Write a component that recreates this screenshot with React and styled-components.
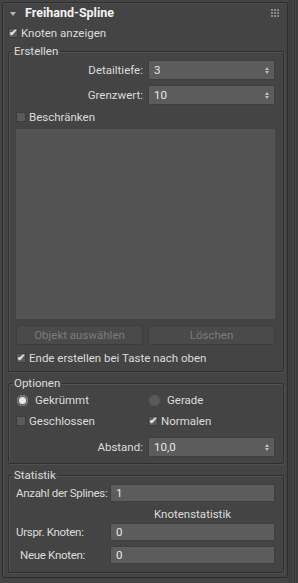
import React from 'react';
import styled, { createGlobalStyle } from 'styled-components';

const Global = createGlobalStyle`
  *, *::before, *::after { box-sizing: border-box; }
  html, body { margin: 0; padding: 0; background: #444444; }
  body { font-family: Roboto, "Noto Sans", sans-serif; font-size: 11.5px; line-height: 14px; color: #dcdcdc; }
`;

const Screen = styled.div`
  width: 298px;
  height: 583px;
  display: flex;
  background: #444444;
  overflow: hidden;
`;

const Rollout = styled.div`
  width: 286px;
  margin: 2px 0 5px 2px;
  border: 1px solid #2e2e2e;
  border-radius: 2px;
  display: flex;
  flex-direction: column;
  box-shadow: inset 1px 1px 0 #4c4c4c;
`;

const Scroll = styled.div`
  flex: 1;
  display: flex;
  gap: 2px;
  padding: 0 1px 0 1px;
  & > span { flex: 1; border-left: 1px solid #333; border-right: 1px solid #383838; background: #474747; }
`;

const Header = styled.div`
  height: 20px;
  flex: none;
  display: flex;
  align-items: center;
  padding: 0 8px 0 7px;
  gap: 9px;
  font-weight: bold;
  color: #f2f2f2;
  font-size: 12.5px;
`;

const Tri = styled.span`
  width: 0;
  height: 0;
  border-left: 3px solid transparent;
  border-right: 3px solid transparent;
  border-top: 4px solid #b8b8b8;
  margin-top: 1px;
`;

const Grip = styled.div`
  margin-left: auto;
  display: grid;
  grid-template-columns: repeat(3, 2px);
  gap: 1px;
  & > i { width: 2px; height: 2px; background: #8a8a8a; }
`;

const CheckRow = styled.label`
  display: flex;
  align-items: center;
  gap: 2px;
  flex: none;
  height: ${p => p.h || 18}px;
  padding-left: ${p => p.pad || 0}px;
`;

const Box = styled.span`
  width: 10px;
  height: 10px;
  background: #5a5a5a;
  border: 1px solid #3c3c3c;
  display: flex;
  align-items: center;
  justify-content: center;
  font-size: 10px;
  font-weight: bold;
  line-height: 1;
  color: #e0e0e0;
  margin-right: 1px;
`;

const Radio = styled.span`
  width: 11px;
  height: 11px;
  border-radius: 50%;
  background: ${p => (p.on ? '#e8e8e8' : '#5a5a5a')};
  box-shadow: ${p => (p.on ? 'inset 0 0 0 2px #6a6a6a' : 'none')};
  margin-right: 5px;
  margin-left: 1px;
`;

const Group = styled.fieldset`
  margin: ${p => p.mt || 0}px 3px 0 5px;
  padding: 0 8px ${p => p.pb || 0}px 7px;
  border: 1px solid #303030;
  border-radius: 2px;
  box-shadow: inset 1px 1px 0 #525252, 1px 1px 0 #4f4f4f;
  min-width: 0;
  flex: none;
`;

const Legend = styled.legend`
  padding: 0 2px 0 1px;
  margin-left: -3px;
  height: 14px;
  color: #dcdcdc;
`;

const FieldRow = styled.div`
  display: grid;
  grid-template-columns: ${p => p.label || 127}px 1fr;
  column-gap: ${p => p.gap || 5}px;
  align-items: center;
  margin-top: ${p => p.mt || 0}px;
`;

const Label = styled.span`
  text-align: ${p => (p.left ? 'left' : 'right')};
  padding-left: ${p => p.pl || 0}px;
  letter-spacing: ${p => (p.left ? '-0.3px' : 'normal')};
  white-space: nowrap;
`;

const Field = styled.div`
  height: ${p => p.h || 20}px;
  background: #5c5c5c;
  border: 1px solid #3e3e3e;
  border-radius: 1px;
  display: flex;
  align-items: center;
  padding: 0 5px;
  color: #e8e8e8;
`;

const Spin = styled.span`
  margin-left: auto;
  display: flex;
  flex-direction: column;
  gap: 1px;
  & > i { width: 0; height: 0; border-left: 2px solid transparent; border-right: 2px solid transparent; }
  & > i:first-child { border-bottom: 3px solid #bdbdbd; }
  & > i:last-child { border-top: 3px solid #bdbdbd; }
`;

const ListArea = styled.div`
  height: 190px;
  background: #535353;
  margin-top: 1px;
`;

const Buttons = styled.div`
  display: grid;
  grid-template-columns: 1fr 1fr;
  gap: 5px;
  margin-top: 6px;
`;

const Button = styled.button`
  height: 20px;
  background: #4a4a4a;
  border: 1px solid #3d3d3d;
  border-radius: 3px;
  color: #7c7c7c;
  font: inherit;
  padding: 0;
`;

const Pair = styled.div`
  display: grid;
  grid-template-columns: 132px 1fr;
  align-items: center;
`;

const Center = styled.div`
  text-align: center;
  padding-left: 94px;
  margin: 5px 0 2px;
`;

const Spinner = ({ value }) => (
  <Field>
    {value}
    <Spin><i /><i /></Spin>
  </Field>
);

const Check = ({ checked, children, h, pad }) => (
  <CheckRow h={h} pad={pad}>
    <Box>{checked ? '✔' : ''}</Box>
    {children}
  </CheckRow>
);

export default function App() {
  return (
    <Screen>
      <Global />
      <Rollout>
        <Header>
          <Tri />
          Freihand-Spline
          <Grip>{[0, 1, 2, 3, 4, 5, 6, 7, 8].map(i => <i key={i} />)}</Grip>
        </Header>
        <Check checked pad={5} h={20}>Knoten anzeigen</Check>

        <Group mt={1} pb={1}>
          <Legend>Erstellen</Legend>
          <FieldRow mt={2}>
            <Label>Detailtiefe:</Label>
            <Spinner value="3" />
          </FieldRow>
          <FieldRow mt={5}>
            <Label>Grenzwert:</Label>
            <Spinner value="10" />
          </FieldRow>
          <Check h={23}>Beschränken</Check>
          <ListArea />
          <Buttons>
            <Button type="button">Objekt auswählen</Button>
            <Button type="button">Löschen</Button>
          </Buttons>
          <Check checked h={25}>Ende erstellen bei Taste nach oben</Check>
        </Group>

        <Group mt={4} pb={6}>
          <Legend>Optionen</Legend>
          <Pair>
            <CheckRow h={20}><Radio on />Gekrümmt</CheckRow>
            <CheckRow h={20}><Radio />Gerade</CheckRow>
          </Pair>
          <Pair>
            <Check h={22}>Geschlossen</Check>
            <Check checked h={22}>Normalen</Check>
          </Pair>
          <FieldRow mt={5}>
            <Label>Abstand:</Label>
            <Spinner value="10,0" />
          </FieldRow>
        </Group>

        <Group mt={4} pb={8}>
          <Legend>Statistik</Legend>
          <FieldRow label={91} gap={3} mt={2}>
            <Label left>Anzahl der Splines:</Label>
            <Field h={18}>1</Field>
          </FieldRow>
          <Center>Knotenstatistik</Center>
          <FieldRow label={91} gap={3}>
            <Label left>Urspr. Knoten:</Label>
            <Field h={18}>0</Field>
          </FieldRow>
          <FieldRow label={91} gap={3} mt={5}>
            <Label left pl={4}>Neue Knoten:</Label>
            <Field h={18}>0</Field>
          </FieldRow>
        </Group>
      </Rollout>
      <Scroll><span /><span /></Scroll>
    </Screen>
  );
}
